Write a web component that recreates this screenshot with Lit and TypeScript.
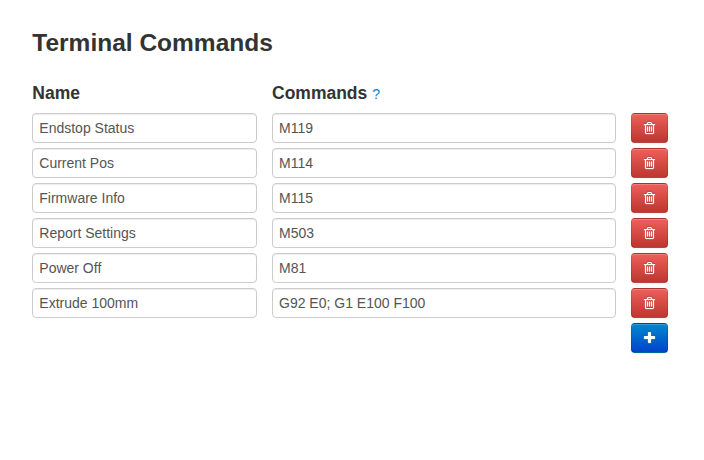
import { LitElement, html, css } from "lit";
import { customElement, state } from "lit/decorators.js";

interface TerminalCommand {
  name: string;
  commands: string;
}

@customElement("app-root")
export class AppRoot extends LitElement {
  static styles = css`
    :host {
      display: block;
      box-sizing: border-box;
      height: 460px;
      padding: 23px 36px 0 32px;
      background: #fff;
      color: #333;
      font: 14px/20px "Liberation Sans", Arial, sans-serif;
    }
    h3 {
      margin: 0 0 20px;
      font-size: 24.5px;
      line-height: 40px;
      text-indent: 0.3px;
    }
    .grid {
      display: grid;
      grid-template-columns: 225px 344px 37px;
      column-gap: 15px;
      row-gap: 5px;
    }
    h4 {
      margin: 0 0 5px;
      font-size: 17.5px;
      line-height: 20px;
      height: 20px;
    }
    h4.name {
      text-indent: 0.3px;
    }
    .help {
      color: #08c;
      font-size: 14px;
      font-weight: normal;
      text-decoration: none;
    }
    input {
      box-sizing: border-box;
      width: 100%;
      height: 30px;
      margin: 0;
      padding: 4px 6px;
      border: 1px solid #ccc;
      border-radius: 4px;
      background: #fff;
      box-shadow: inset 0 1px 1px rgba(0, 0, 0, 0.075);
      color: #555;
      font: inherit;
      outline: none;
    }
    input.name {
      padding-left: 6.3px;
    }
    button {
      display: flex;
      align-items: flex-start;
      justify-content: center;
      box-sizing: border-box;
      width: 37px;
      height: 30px;
      margin: 0;
      padding: 8px 0 0;
      border: 1px solid;
      border-radius: 4px;
      color: #fff;
      box-shadow: inset 0 1px 0 rgba(255, 255, 255, 0.2), 0 1px 2px rgba(0, 0, 0, 0.05);
      cursor: pointer;
    }
    .danger {
      background: linear-gradient(#ee5f5b, #bd362f) padding-box #da4f49;
      background-clip: border-box;
      border-color: rgba(0, 0, 0, 0.1) rgba(0, 0, 0, 0.1) rgba(0, 0, 0, 0.25);
    }
    .primary {
      grid-column: 3;
      background: linear-gradient(#08c, #04c) padding-box #006dcc;
      background-clip: border-box;
      border-color: rgba(0, 0, 0, 0.1) rgba(0, 0, 0, 0.1) rgba(0, 0, 0, 0.25);
    }
    svg {
      display: block;
      overflow: visible;
      fill: currentColor;
      stroke: currentColor;
      stroke-width: 30;
      filter: drop-shadow(0 -1px 0 rgba(0, 0, 0, 0.25));
    }
  `;

  @state() private rows: TerminalCommand[] = [
    { name: "Endstop Status", commands: "M119" },
    { name: "Current Pos", commands: "M114" },
    { name: "Firmware Info", commands: "M115" },
    { name: "Report Settings", commands: "M503" },
    { name: "Power Off", commands: "M81" },
    { name: "Extrude 100mm", commands: "G92 E0; G1 E100 F100" },
  ];

  private remove(row: TerminalCommand) {
    this.rows = this.rows.filter((r) => r !== row);
  }

  private add() {
    this.rows = [...this.rows, { name: "", commands: "" }];
  }

  private trashIcon() {
    return html`<svg width="11" height="12" viewBox="192 128 1408 1536" aria-hidden="true">
      <path d="M704 736v576q0 14-9 23t-23 9h-64q-14 0-23-9t-9-23v-576q0-14 9-23t23-9h64q14 0 23 9t9 23zm256 0v576q0 14-9 23t-23 9h-64q-14 0-23-9t-9-23v-576q0-14 9-23t23-9h64q14 0 23 9t9 23zm256 0v576q0 14-9 23t-23 9h-64q-14 0-23-9t-9-23v-576q0-14 9-23t23-9h64q14 0 23 9t9 23zm128 724v-948h-896v948q0 22 7 40.5t14.5 27 10.5 8.5h832q3 0 10.5-8.5t14.5-27 7-40.5zm-672-1076h448l-48-117q-7-9-17-11h-317q-10 2-17 11zm928 32v64q0 14-9 23t-23 9h-96v948q0 83-47 143.5t-113 60.5h-832q-66 0-113-58.5t-47-141.5v-952h-96q-14 0-23-9t-9-23v-64q0-14 9-23t23-9h309l70-167q15-37 54-63t79-26h320q40 0 79 26t54 63l70 167h309q14 0 23 9t9 23z"/>
    </svg>`;
  }

  render() {
    return html`
      <h3>Terminal Commands</h3>
      <div class="grid">
        <h4 class="name">Name</h4>
        <h4>Commands <a class="help" href="#">?</a></h4>
        <span></span>
        ${this.rows.map(
          (row) => html`
            <input class="name" type="text" aria-label="Name" .value=${row.name} />
            <input type="text" aria-label="Commands" .value=${row.commands} />
            <button class="danger" aria-label="Delete" @click=${() => this.remove(row)}>${this.trashIcon()}</button>
          `
        )}
        <button class="primary" aria-label="Add" @click=${this.add}>
          <svg width="11" height="11" viewBox="192 128 1408 1408" aria-hidden="true">
            <path d="M1600 736v192q0 40-28 68t-68 28h-416v416q0 40-28 68t-68 28h-192q-40 0-68-28t-28-68v-416h-416q-40 0-68-28t-28-68v-192q0-40 28-68t68-28h416v-416q0-40 28-68t68-28h192q40 0 68 28t28 68v416h416q40 0 68 28t28 68z"/>
          </svg>
        </button>
      </div>
    `;
  }
}
